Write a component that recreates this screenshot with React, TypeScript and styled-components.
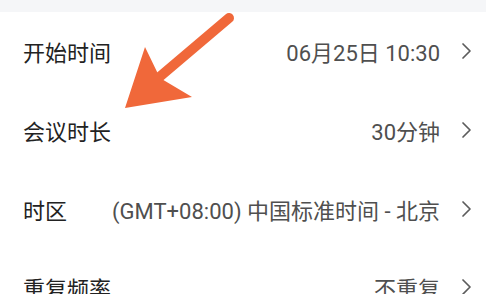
import React from 'react';
import styled, { createGlobalStyle } from 'styled-components';

const GlobalStyle = createGlobalStyle`
  html, body {
    margin: 0;
    padding: 0;
    background: #ffffff;
  }
  body {
    font-family: Roboto, "Noto Sans CJK SC", "Noto Sans", sans-serif;
  }
`;

const rows = [
  { label: '开始时间', value: '06月25日 10:30' },
  { label: '会议时长', value: '30分钟' },
  { label: '时区', value: '(GMT+08:00) 中国标准时间 - 北京' },
  { label: '重复频率', value: '不重复' },
];

function Chevron() {
  return (
    <ChevronIcon viewBox="0 0 11 18" width="11" height="18">
      <path d="M2 2 L9 9 L2 16" fill="none" stroke="#5c5c5c" strokeWidth="1.7" strokeLinecap="round" strokeLinejoin="round" />
    </ChevronIcon>
  );
}

function Arrow() {
  return (
    <ArrowOverlay viewBox="0 0 486 294" width="486" height="294">
      <line x1="229" y1="18" x2="150" y2="85" stroke="#f0683a" strokeWidth="10" strokeLinecap="round" />
      <polygon points="125,108 145,47 160,78 192,97" fill="#f0683a" />
    </ArrowOverlay>
  );
}

export default function App() {
  return (
    <>
      <GlobalStyle />
      <Screen>
        <TopBand />
        <List>
          {rows.map((r) => (
            <Row key={r.label}>
              <Label>{r.label}</Label>
              <Value>{r.value}</Value>
              <Chevron />
            </Row>
          ))}
        </List>
        <Arrow />
      </Screen>
    </>
  );
}

const Screen = styled.div`
  position: relative;
  width: 486px;
  height: 294px;
  overflow: hidden;
  background: #ffffff;
`;

const TopBand = styled.div`
  height: 12px;
  background: #f5f6f8;
`;

const List = styled.div`
  display: flex;
  flex-direction: column;
`;

const Row = styled.div`
  height: 78.7px;
  flex-shrink: 0;
  display: flex;
  align-items: center;
  padding: 0 14px 0 23px;
`;

const Label = styled.div`
  font-size: 22px;
  color: #222222;
  white-space: nowrap;
`;

const Value = styled.div`
  margin-left: auto;
  font-size: 22px;
  color: #4f4f4f;
  white-space: nowrap;
`;

const ChevronIcon = styled.svg`
  margin-left: 21px;
  flex-shrink: 0;
`;

const ArrowOverlay = styled.svg`
  position: absolute;
  left: 0;
  top: 0;
  pointer-events: none;
`;
